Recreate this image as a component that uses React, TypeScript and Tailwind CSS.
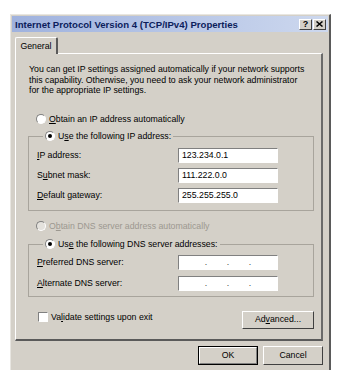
import React from 'react';

const raised =
  'border border-t-white border-l-white border-r-[#404040] border-b-[#404040] bg-[#d4d0c8]';
const sunken =
  'border border-t-[#808080] border-l-[#808080] border-r-white border-b-white';

function Radio({ checked, disabled }: { checked?: boolean; disabled?: boolean }) {
  return (
    <span
      className={`flex h-[10px] w-[10px] shrink-0 items-center justify-center rounded-full ${sunken} ${
        disabled ? 'bg-[#e4e2dd]' : 'bg-white'
      }`}
    >
      {checked && <span className="h-[4px] w-[4px] rounded-full bg-black" />}
    </span>
  );
}

function Accel({ text, at }: { text: string; at: number }) {
  return (
    <>
      {text.slice(0, at)}
      <span className="underline underline-offset-1">{text[at]}</span>
      {text.slice(at + 1)}
    </>
  );
}

function Field({ label, at, value }: { label: string; at: number; value?: string }) {
  return (
    <div className="flex h-[15px] items-center">
      <span className="w-[141px]">
        <Accel text={label} at={at} />
      </span>
      <div className={`flex h-[15px] w-[100px] items-center bg-white px-[3px] ${sunken}`}>
        {value ? (
          <span>{value}</span>
        ) : (
          <span className="flex w-full justify-around px-[13px] text-[#444]">
            <span>.</span>
            <span>.</span>
            <span>.</span>
          </span>
        )}
      </div>
    </div>
  );
}

export default function App() {
  return (
    <div className="h-[390px] w-[339px] bg-white pl-[10px] pt-[14px] font-['Liberation_Sans',Arial,sans-serif] text-[8.75px] leading-[11px] text-black">
      <div className="flex h-[356px] w-[321px] flex-col border-l border-t border-r-2 border-l-[#e8e6e1] border-t-[#e8e6e1] border-r-[#5a5a5a] bg-[#d4d0c8]">
        {/* title bar */}
        <div className="mx-[1px] mt-[1px] flex h-[16px] items-center bg-gradient-to-r from-[#9fb2de] to-[#cdd8ee] pl-[3px] pr-[2px]">
          <span className="flex-1 text-[9.6px] font-bold text-[#0c1d5c]">
            Internet Protocol Version 4 (TCP/IPv4) Properties
          </span>
          <div className="flex gap-[1px]">
            <span className={`flex h-[11px] w-[13px] items-center justify-center text-[9px] font-bold leading-none ${raised}`}>
              ?
            </span>
            <span className={`flex h-[11px] w-[13px] items-center justify-center ${raised}`}>
              <svg width="7" height="6" viewBox="0 0 7 6">
                <path d="M0.5 0.5 L6.5 5.5 M6.5 0.5 L0.5 5.5" stroke="#000" strokeWidth="1.5" />
              </svg>
            </span>
          </div>
        </div>

        <div className="px-[4px] pt-[5px]">
          {/* tab */}
          <div className="relative z-10 -mb-[1px] flex h-[17px] w-[43px] items-center justify-center rounded-t-[2px] border-l border-r-2 border-t border-l-white border-t-white border-r-[#5a5a5a] bg-[#d4d0c8]">
            General
          </div>

          {/* tab panel */}
          <div className="flex h-[288px] w-[308px] flex-col border-b-2 border-l border-r-2 border-t border-b-[#5a5a5a] border-l-white border-r-[#6a6a6a] border-t-white pl-[12px] pt-[10px]">
            <p className="ml-[1px] leading-[10.5px]">
              You can get IP settings assigned automatically if your network supports
              <br />
              this capability. Otherwise, you need to ask your network administrator
              <br />
              for the appropriate IP settings.
            </p>

            <div className="ml-[8px] mt-[18px] flex h-[11px] items-center gap-[2px]">
              <Radio />
              <span className="pl-[1px]">
                <Accel text="Obtain an IP address automatically" at={0} />
              </span>
            </div>

            <fieldset className="mt-[6px] w-[286px] border border-[#a8a49c] pb-[7px] pl-[8px] pt-[6px]">
              <legend className="ml-[6px] flex h-[11px] items-center gap-[2px] px-[2px]">
                <Radio checked />
                <span className="pl-[1px]">
                  <Accel text="Use the following IP address:" at={1} />
                </span>
              </legend>
              <div className="flex flex-col gap-[5px]">
                <Field label="IP address:" at={0} value="123.234.0.1" />
                <Field label="Subnet mask:" at={1} value="111.222.0.0" />
                <Field label="Default gateway:" at={0} value="255.255.255.0" />
              </div>
            </fieldset>

            <div className="ml-[8px] mt-[10px] flex h-[11px] items-center gap-[2px] text-[#9c9890]">
              <Radio disabled />
              <span className="pl-[1px]">
                <Accel text="Obtain DNS server address automatically" at={1} />
              </span>
            </div>

            <fieldset className="mt-[7px] w-[286px] border border-[#a8a49c] pb-[5px] pl-[8px] pt-[5px]">
              <legend className="ml-[6px] flex h-[11px] items-center gap-[2px] px-[2px]">
                <Radio checked />
                <span className="pl-[1px]">
                  <Accel text="Use the following DNS server addresses:" at={2} />
                </span>
              </legend>
              <div className="flex flex-col gap-[6px]">
                <Field label="Preferred DNS server:" at={0} />
                <Field label="Alternate DNS server:" at={0} />
              </div>
            </fieldset>

            <div className="mt-[14px] flex w-[286px] items-start justify-between">
              <div className="ml-[10px] mt-[1px] flex items-center gap-[3px]">
                <span className={`h-[10px] w-[10px] bg-white ${sunken}`} />
                <span>
                  <Accel text="Validate settings upon exit" at={2} />
                </span>
              </div>
              <button className={`h-[18px] w-[72px] ${raised}`}>
                <Accel text="Advanced..." at={2} />
              </button>
            </div>
          </div>

          {/* dialog buttons */}
          <div className="mt-[5px] flex justify-end gap-[5px] pr-[2px]">
            <button className="h-[19px] w-[60px] border border-black bg-[#d4d0c8]">
              <span className="flex h-full w-full items-center justify-center border border-t-white border-l-white border-r-[#808080] border-b-[#808080]">
                OK
              </span>
            </button>
            <button className={`h-[19px] w-[60px] ${raised}`}>Cancel</button>
          </div>
        </div>
      </div>
    </div>
  );
}
